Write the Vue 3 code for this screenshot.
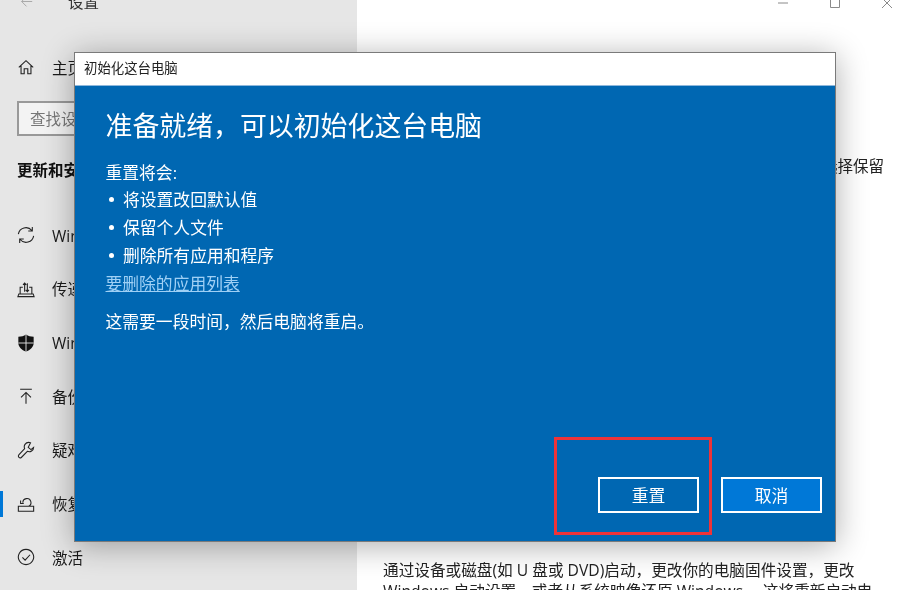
<template>
  <div class="window">
    <aside class="sidebar">
      <div class="top-bar">
        <svg class="back" viewBox="0 0 16 16"><path d="M15 8H2M8 2 2 8l6 6" /></svg>
        <span>设置</span>
      </div>
      <div class="nav-row home">
        <svg class="icon" viewBox="0 0 20 20"><path d="M2 10.500 10 3l8 7.500M4.500 8.500V17.500H8V12h4v5.500h3.500V8.500" /></svg>
        <span>主页</span>
      </div>
      <div class="search">查找设置</div>
      <div class="group-title">更新和安全</div>
      <nav class="nav">
        <div v-for="item in navItems" :key="item.label" class="nav-row" :class="{ active: item.active }">
          <svg class="icon" viewBox="0 0 20 20">
            <path v-for="d in item.paths" :key="d" :d="d" />
            <path v-if="item.fill" class="solid" :d="item.fill" />
            <path v-if="item.cross" class="cross" :d="item.cross" />
          </svg>
          <span>{{ item.label }}</span>
        </div>
      </nav>
    </aside>

    <main class="content">
      <div class="controls">
        <svg viewBox="0 0 12 12"><path d="M1 6h10" /></svg>
        <svg viewBox="0 0 12 12"><path d="M1.500 1.500h9v9h-9z" /></svg>
        <svg viewBox="0 0 12 12"><path d="M1 1l10 10M11 1 1 11" /></svg>
      </div>
      <h1>恢复</h1>
      <p class="intro">如果电脑未正常运行&#xFF0C;重置电脑可能会解决问题&#x3002;重置时&#xFF0C;可以选择保留</p>
      <p class="boot-text">通过设备或磁盘(如 U 盘或 DVD)启动&#xFF0C;更改你的电脑固件设置&#xFF0C;更改<br />Windows 启动设置&#xFF0C;或者从系统映像还原 Windows&#x3002; 这将重新启动电</p>
    </main>

    <section class="dialog">
      <div class="dialog-title">初始化这台电脑</div>
      <div class="dialog-body">
        <h2>准备就绪&#xFF0C;可以初始化这台电脑</h2>
        <p class="line">重置将会:</p>
        <ul>
          <li v-for="text in resetItems" :key="text">{{ text }}</li>
        </ul>
        <a class="line link">要删除的应用列表</a>
        <p class="line note">这需要一段时间&#xFF0C;然后电脑将重启&#x3002;</p>
        <div class="actions">
          <button class="btn">重置</button>
          <button class="btn primary">取消</button>
        </div>
        <div class="highlight"></div>
      </div>
    </section>
  </div>
</template>

<script setup>
const resetItems = ['将设置改回默认值', '保留个人文件', '删除所有应用和程序']

const navItems = [
  { label: 'Windows 更新', paths: ['M1.500 9A8.500 8.500 0 0 1 16.500 5M18.500 11A8.500 8.500 0 0 1 3.500 15M17 1V5.500H12.500M3 19V14.500H7.500'] },
  { label: '传递优化', paths: ['M1 18.500H19L18 15.500H2ZM3.500 15.500V8H6.500M16.500 15.500V8H13.500M8.500 13V3.500M6.700 5.500 8.500 3.500 10.300 5.500M11.500 3.500V13M9.700 11 11.500 13 13.300 11'] },
  { label: 'Windows 安全中心', paths: [], fill: 'M10 .5c2.500 1.600 5 2.400 8.500 2.500V10c0 4.500-3.800 7.800-8.500 9.500C5.300 17.800 1.500 14.500 1.500 10V3C5 2.900 7.500 2.100 10 .5Z', cross: 'M10 .5V19.500M1.500 10H18.500' },
  { label: '备份', paths: ['M3.500 2.500H16.500M10 18.500V6M4.500 11.500 10 6l5.500 5.500'] },
  { label: '疑难解答', paths: ['M13 1.500a5 5 0 0 0-4.500 7L2 15.500a2 2 0 0 0 2.800 2.800L11.500 11.500a5 5 0 0 0 7-4.500L15.500 9.500 12.500 7 15 2Z'] },
  { label: '恢复', active: true, paths: ['M6.500 8.500A4.500 4.500 0 1 1 13 12.500M4 6v3.500h3.500M1.500 12.500H18.500V18H1.500Z'] },
  { label: '激活', paths: ['M10 1.500a8.500 8.500 0 1 0 .01 0ZM6 10.500l3 3 5.500-6'] },
]
</script>

<style>
html, body { margin: 0; overflow: hidden; background: #fff; }
</style>

<style scoped>
.window { position: relative; display: grid; grid-template-columns: 357px 1fr; height: 590px; width: 898px; overflow: hidden; font-family: "Open Sans", "Noto Sans CJK SC", sans-serif; font-size: 15.500px; color: #1a1a1a; background: #fff; filter: blur(0.35px); }

.sidebar { background: #e6e6e6; }
.top-bar { display: flex; align-items: center; gap: 35px; height: 40px; margin-top: -19px; padding-left: 20px; color: #333; }
.back { width: 13px; height: 13px; fill: none; stroke: #a8a8a8; stroke-width: 1.200; }
.nav-row { position: relative; display: flex; align-items: center; gap: 17px; padding-left: 17px; height: 53.67px; }
.home { height: 40px; margin-top: 26px; }
.icon { width: 18px; height: 18px; flex: none; fill: none; stroke: #222; stroke-width: 1.200; }
.solid { fill: #111; stroke: none; }
.cross { stroke: #e6e6e6; stroke-width: 1; }
.search { display: flex; align-items: center; box-sizing: border-box; height: 35px; margin: 14px 17px 0; padding-left: 11px; border: 2px solid #999; background: #f3f3f3; color: #777; }
.group-title { height: 24px; line-height: 24px; margin: 22px 0 0 17px; font-weight: 700; color: #111; }
.nav { margin-top: 26.500px; }
.active::before { content: ""; position: absolute; left: 0; top: 14px; width: 3px; height: 26px; background: #0078d7; }

.content { position: relative; padding-left: 26px; }
.controls { position: absolute; top: -3px; right: 5px; display: flex; gap: 40px; }
.controls svg { width: 12px; height: 12px; fill: none; stroke: #8a8a8a; stroke-width: 1; }
h1 { margin: 47px 0 0; font-size: 28px; font-weight: 400; line-height: 40px; }
.intro { margin: 68px 0 0 5px; line-height: 22px; white-space: nowrap; color: #222; }
.boot-text { margin: 383px 0 0; font-size: 15.650px; line-height: 21px; white-space: nowrap; color: #222; }

.dialog { position: absolute; left: 74px; top: 52px; width: 762px; height: 490px; box-sizing: border-box; display: flex; flex-direction: column; border: 1px solid #7a7a7a; box-shadow: 0 4px 30px rgba(0, 0, 0, 0.32); }
.dialog-title { height: 32px; line-height: 30px; padding-left: 9px; font-size: 13.400px; background: #fff; color: #222; border-bottom: 1px solid #8fb8dc; }
.dialog-body { position: relative; flex: 1; display: flex; flex-direction: column; padding: 0 13px 28px 30.500px; background: #0067b2; color: #fff; }
h2 { margin: 16px 0 0; font-size: 26.900px; font-weight: 400; line-height: 48px; }
.line { display: block; margin: 0; font-size: 16.800px; line-height: 28px; }
h2 + .line { margin-top: 9px; }
ul { margin: -1px 0 0; padding: 0 0 0 17.500px; font-size: 16.800px; line-height: 28px; }
li { list-style: none; position: relative; }
li::before { content: ""; position: absolute; left: -14.500px; top: 11px; width: 5px; height: 5px; border-radius: 50%; background: #fff; }
.link { color: #9fd0f5; text-decoration: underline; }
.note { margin-top: 10px; }
.actions { display: flex; justify-content: flex-end; gap: 22px; margin-top: auto; }
.btn { box-sizing: border-box; width: 101px; height: 36px; padding: 0; border: 2px solid #fff; background: transparent; color: #fff; font: inherit; font-size: 16.800px; }
.primary { background: #0078d7; }
.highlight { position: absolute; left: 479px; top: 351px; width: 158px; height: 98px; box-sizing: border-box; border: 3px solid #ee3338; }
</style>
